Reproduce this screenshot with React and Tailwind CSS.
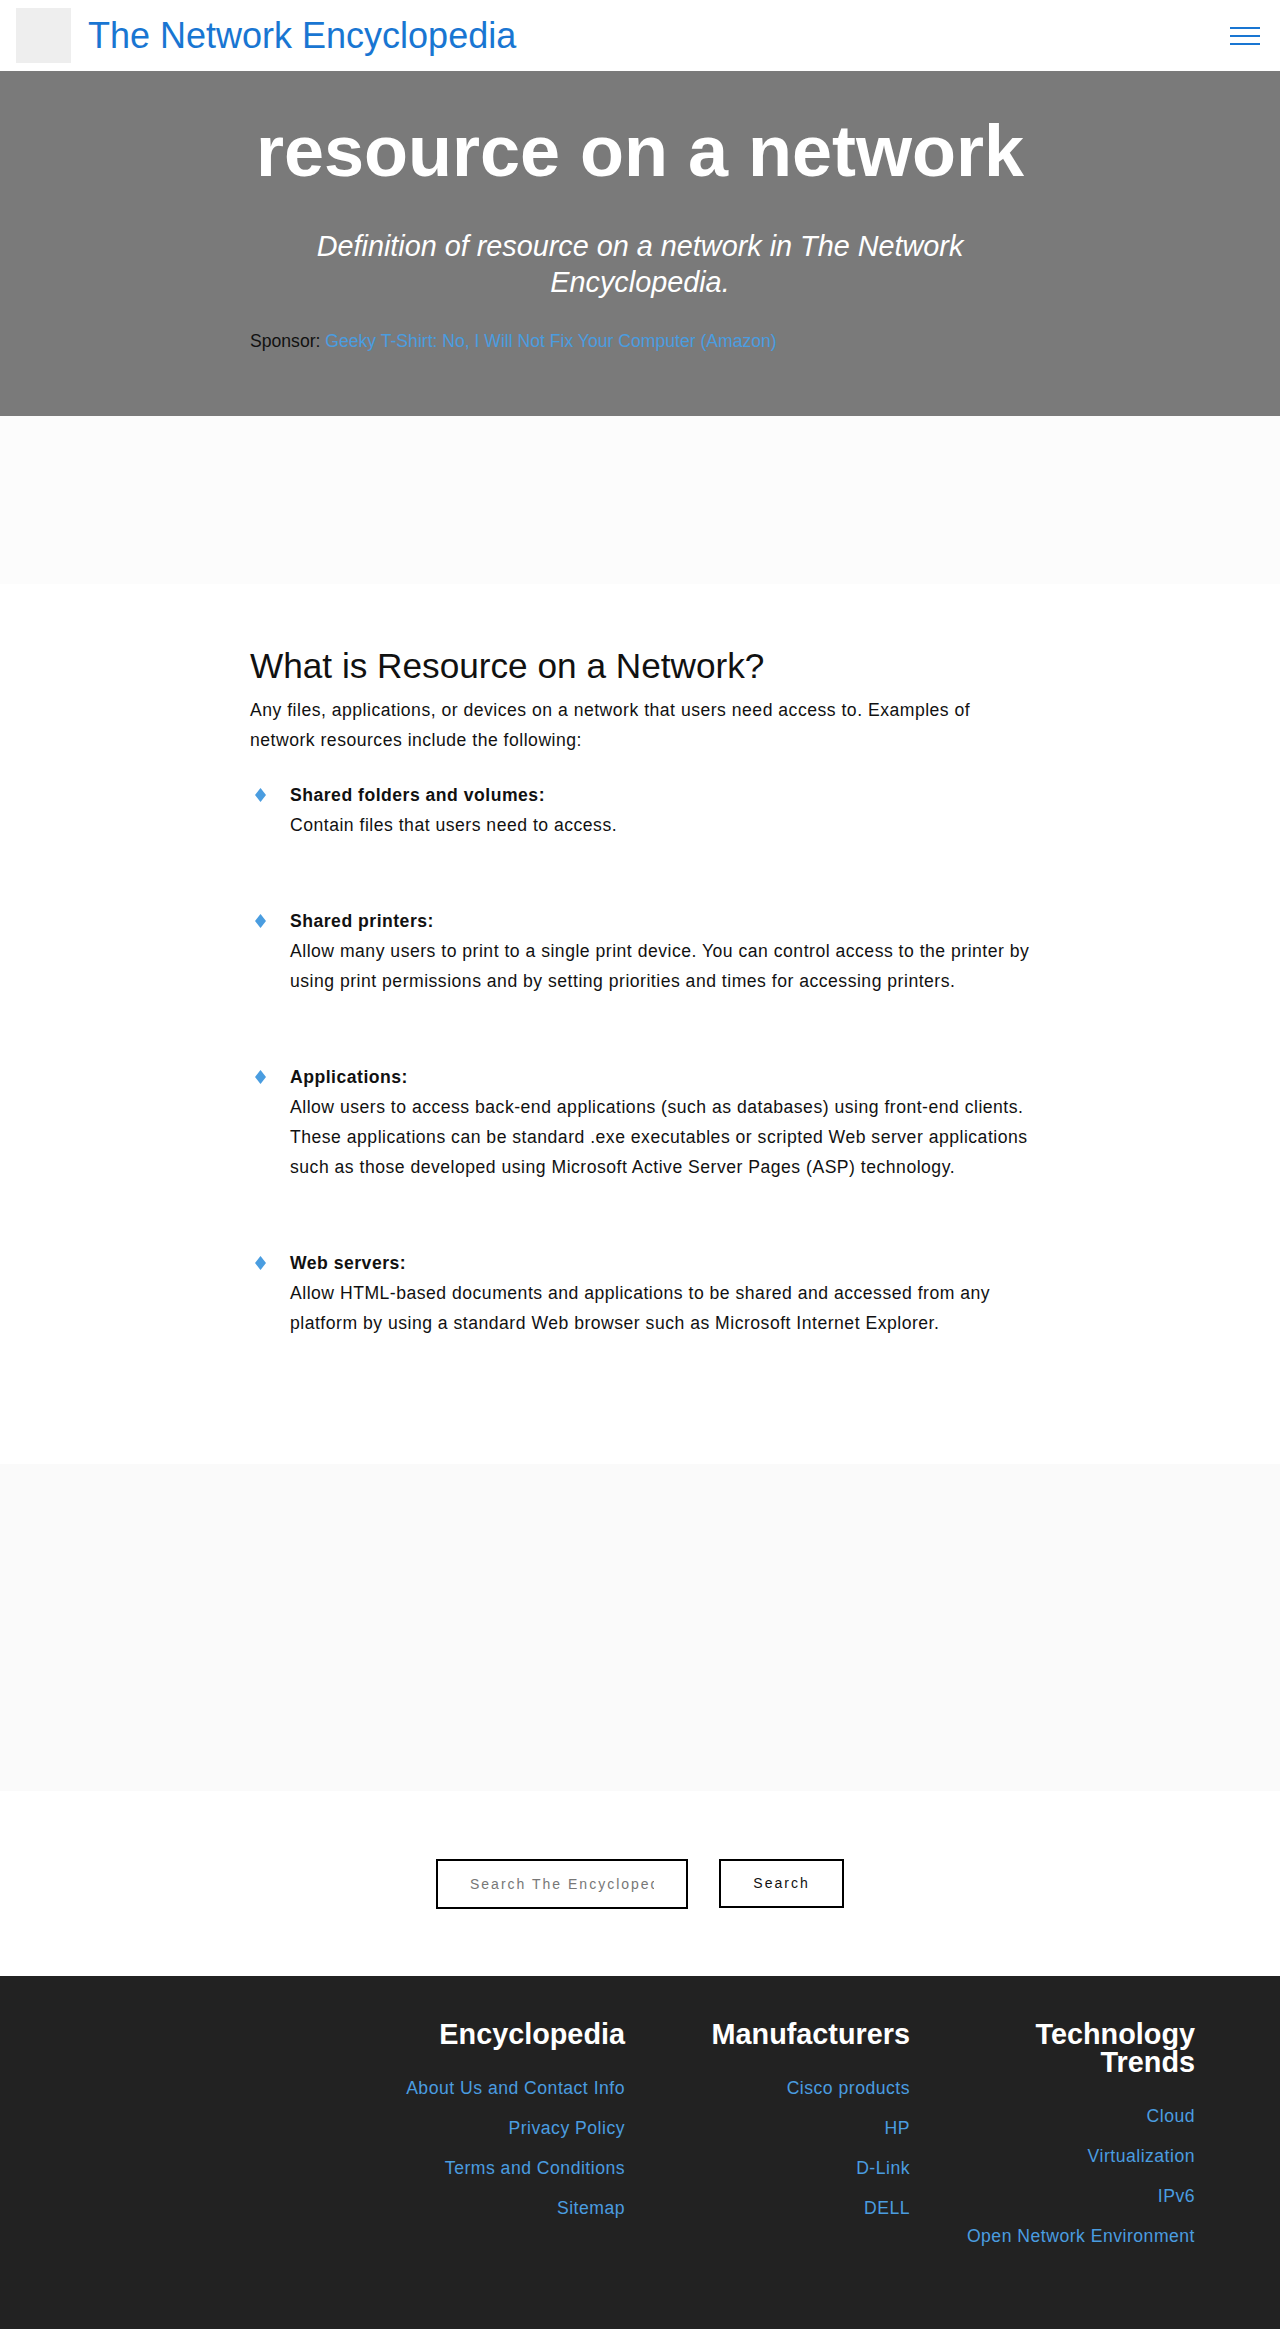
import React from "react";

const items = [
  {
    title: "Shared folders and volumes:",
    text: "Contain files that users need to access.",
  },
  {
    title: "Shared printers:",
    text: "Allow many users to print to a single print device. You can control access to the printer by using print permissions and by setting priorities and times for accessing printers.",
  },
  {
    title: "Applications:",
    text: "Allow users to access back-end applications (such as databases) using front-end clients. These applications can be standard .exe executables or scripted Web server applications such as those developed using Microsoft Active Server Pages (ASP) technology.",
  },
  {
    title: "Web servers:",
    text: "Allow HTML-based documents and applications to be shared and accessed from any platform by using a standard Web browser such as Microsoft Internet Explorer.",
  },
];

const footerCols = [
  {
    title: "Encyclopedia",
    links: ["About Us and Contact Info", "Privacy Policy", "Terms and Conditions", "Sitemap"],
  },
  {
    title: "Manufacturers",
    links: ["Cisco products", "HP", "D-Link", "DELL"],
  },
  {
    title: "Technology Trends",
    links: ["Cloud", "Virtualization", "IPv6", "Open Network Environment"],
  },
];

function Diamond() {
  return (
    <svg width="13" height="14" viewBox="0 0 13 14" className="block">
      <polygon points="6.5,0 12,7 6.5,14 1,7" fill="#4a9de0" />
    </svg>
  );
}

export default function App() {
  return (
    <div className="font-['Liberation_Sans',Arial,sans-serif] text-[#111]">
      {/* Header */}
      <header className="h-[71px] bg-white flex items-center justify-between pl-4 pr-5">
        <div className="flex items-center gap-[17px]">
          <div className="w-[55px] h-[55px] bg-[#eeeeee]" />
          <span className="text-[36px] leading-[43px] text-[#1976d2]">The Network Encyclopedia</span>
        </div>
        <div className="flex flex-col gap-[6px] w-[30px]">
          <span className="block h-[2px] bg-[#1976d2]" />
          <span className="block h-[2px] bg-[#1976d2]" />
          <span className="block h-[2px] bg-[#1976d2]" />
        </div>
      </header>

      {/* Hero */}
      <section className="bg-[#7a7a7a] pt-[37px] pb-[62px]">
        <div className="max-w-[780px] mx-auto">
          <h1 className="text-center text-white font-bold text-[72px] leading-[86px]">resource on a network</h1>
          <p className="mt-[34px] text-center text-white italic text-[28.8px] leading-[36px] px-[60px]">
            Definition of resource on a network in The Network Encyclopedia.
          </p>
          <p className="mt-[28px] text-[17.6px] leading-[26px] text-[#111]">
            Sponsor: <a className="text-[#4a9de0]">Geeky T-Shirt: No, I Will Not Fix Your Computer (Amazon)</a>
          </p>
        </div>
      </section>

      {/* Ad area */}
      <div className="h-[168px] bg-[#fcfcfc]" />

      {/* Content */}
      <section className="bg-white pt-[61px] pb-[126px]">
        <div className="max-w-[780px] mx-auto">
          <h2 className="text-[35.2px] leading-[42px] text-[#111]">What is Resource on a Network?</h2>
          <p className="mt-[8px] text-[17.6px] leading-[30px] tracking-[0.5px] text-[#111]">
            Any files, applications, or devices on a network that users need access to. Examples of network resources include the following:
          </p>
          <ul className="mt-[25px] flex flex-col gap-[66px]">
            {items.map((it) => (
              <li key={it.title} className="flex">
                <div className="w-[40px] pl-[4px] pt-[8px] shrink-0">
                  <Diamond />
                </div>
                <div className="text-[17.6px] leading-[30px] tracking-[0.5px] text-[#111]">
                  <div className="font-bold">{it.title}</div>
                  <div>{it.text}</div>
                </div>
              </li>
            ))}
          </ul>
        </div>
      </section>

      {/* Ad area 2 */}
      <div className="h-[327px] bg-[#fafafa]" />

      {/* Search */}
      <section className="bg-white h-[185px] flex items-center justify-center gap-[31px]">
        <input
          type="text"
          placeholder="Search The Encyclopedia"
          className="w-[252px] h-[50px] border-2 border-black px-[32px] text-[14px] tracking-[2px] text-[#111] placeholder:text-[#777] outline-none bg-white"
        />
        <button className="w-[125px] h-[49px] border-2 border-black text-[14px] tracking-[2px] text-[#111] bg-white">
          Search
        </button>
      </section>

      {/* Footer */}
      <footer className="bg-[#222222] pt-[44px] pb-[78px] flex justify-end pr-[70px]">
        {footerCols.map((col) => (
          <div key={col.title} className="w-[285px] px-[15px] text-right">
            <h3 className="text-white font-bold text-[28.8px] leading-[28px]">{col.title}</h3>
            <ul className="mt-[25px] flex flex-col gap-[10px]">
              {col.links.map((l) => (
                <li key={l} className="text-[17.6px] leading-[30px] tracking-[0.5px] text-[#4a9de0]">
                  {l}
                </li>
              ))}
            </ul>
          </div>
        ))}
      </footer>
    </div>
  );
}
